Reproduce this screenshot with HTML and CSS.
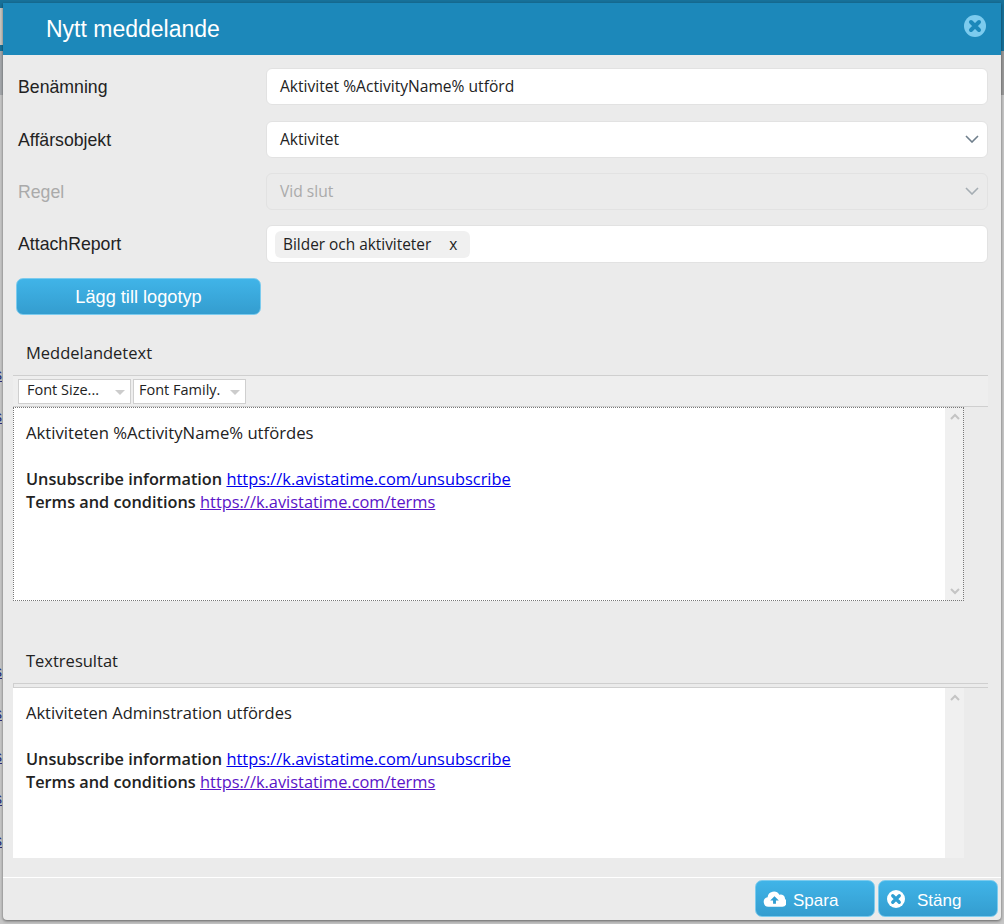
FILE: index.html
```html
<!DOCTYPE html>
<html lang="en">
<head>
  <meta charset="UTF-8">
  <meta name="viewport" content="width=device-width, initial-scale=1.0">
  <title>Nytt meddelande</title>
  <link rel="stylesheet" href="styles.css">
</head>
<body>
  <div class="backdrop">
    <!-- page behind the dialog, only its cut off links show -->
    <div class="behind">
      <span>s</span><span>s</span>
      <span class="blank">s</span><span class="blank">s</span><span class="blank">s</span><span class="blank">s</span><span class="blank">s</span>
      <span>s</span><span>s</span><span>s</span><span>s</span><span>s</span>
    </div>

    <div class="modal">
      <div class="modal-header">
        <h1>Nytt meddelande</h1>
        <svg class="close-icon" width="22" height="22" viewBox="0 0 22 22">
          <circle cx="11" cy="11" r="11" fill="#7ccbee"/>
          <path d="M7 7l8 8M15 7l-8 8" stroke="#1c88ba" stroke-width="4" stroke-linecap="round"/>
        </svg>
      </div>

      <div class="modal-body">
        <div class="form-row">
          <label>Benämning</label>
          <div class="field">Aktivitet %ActivityName% utförd</div>
        </div>
        <div class="form-row">
          <label>Affärsobjekt</label>
          <div class="field select">Aktivitet
            <svg class="chevron" width="14" height="8" viewBox="0 0 14 8"><path d="M1 1l6 6 6-6" fill="none" stroke="#6f7f8c" stroke-width="1.6"/></svg>
          </div>
        </div>
        <div class="form-row disabled">
          <label>Regel</label>
          <div class="field select">Vid slut
            <svg class="chevron" width="14" height="8" viewBox="0 0 14 8"><path d="M1 1l6 6 6-6" fill="none" stroke="#a5adb3" stroke-width="1.6"/></svg>
          </div>
        </div>
        <div class="form-row tags-row">
          <label>AttachReport</label>
          <div class="field tags"><span class="tag">Bilder och aktiviteter <span class="tag-x">x</span></span></div>
        </div>

        <button class="btn btn-logo">Lägg till logotyp</button>

        <div class="section-title">Meddelandetext</div>
        <div class="toolbar">
          <div class="tool-select">Font Size...<span class="caret"></span></div>
          <div class="tool-select family">Font Family.<span class="caret"></span></div>
        </div>
        <div class="editor editor-source">
          <div class="editor-text">
            <p>Aktiviteten %ActivityName% utfördes</p>
            <p class="gap"><b>Unsubscribe information</b> <a href="#">https://k.avistatime.com/unsubscribe</a></p>
            <p><b>Terms and conditions</b> <a href="#" class="visited">https://k.avistatime.com/terms</a></p>
          </div>
          <div class="scrollbar">
            <svg width="10" height="7" viewBox="0 0 10 7"><path d="M1 6l4-4 4 4" fill="none" stroke="#c4c4c4" stroke-width="2"/></svg>
            <svg width="10" height="7" viewBox="0 0 10 7"><path d="M1 1l4 4 4-4" fill="none" stroke="#c4c4c4" stroke-width="2"/></svg>
          </div>
        </div>

        <div class="section-title result-title">Textresultat</div>
        <div class="toolbar toolbar-empty"></div>
        <div class="editor editor-result">
          <div class="editor-text">
            <p>Aktiviteten Adminstration utfördes</p>
            <p class="gap"><b>Unsubscribe information</b> <a href="#">https://k.avistatime.com/unsubscribe</a></p>
            <p><b>Terms and conditions</b> <a href="#" class="visited">https://k.avistatime.com/terms</a></p>
          </div>
          <div class="scrollbar">
            <svg width="10" height="7" viewBox="0 0 10 7"><path d="M1 6l4-4 4 4" fill="none" stroke="#c4c4c4" stroke-width="2"/></svg>
          </div>
        </div>
      </div>

      <div class="modal-footer">
        <button class="btn btn-foot">
          <svg width="23" height="18" viewBox="0 0 24 18"><path d="M6 17a5 5 0 0 1-1.200-9.900A6.500 6.500 0 0 1 17 4.600 4.500 4.500 0 0 1 23 9a4.500 4.500 0 0 1-3 8z" fill="#fff"/><path d="M12 6l-4.500 4.500h3V14h3v-3.500h3z" fill="#2f9fd3"/></svg>
          <span class="foot-label">Spara</span>
        </button>
        <button class="btn btn-foot btn-close">
          <svg width="18" height="18" viewBox="0 0 22 22"><circle cx="11" cy="11" r="11" fill="#fff"/><path d="M7 7l8 8M15 7l-8 8" stroke="#2f9fd3" stroke-width="4" stroke-linecap="round"/></svg>
          <span class="foot-label">Stäng</span>
        </button>
      </div>
    </div>
  </div>
</body>
</html>
```

FILE: styles.css
```css
html, body {
  margin: 0;
  height: 100%;
  overflow: hidden;
}
body {
  font-family: "Liberation Sans", Arial, sans-serif;
  background-color: #c4c4c4;
}
.backdrop {
  position: relative;
  height: 924px;
  padding: 3px 3px 4px 3px;
  box-sizing: border-box;
  background:
    linear-gradient(#17719a 0, #17719a 8px, #c9c6c0 8px, #c9c6c0 45px, #17719a 45px, #17719a 51px, #a5a8ac 51px, #a5a8ac 95px, #c6c6c6 95px) left top / 3px 100% no-repeat,
    linear-gradient(#17719a 0, #17719a 51px, #9a9a9a 51px, #9a9a9a 95px, #c6c6c6 95px) right top / 3px 100% no-repeat,
    linear-gradient(#17719a 0, #17719a 3px, #c4c4c4 3px);
}
.behind {
  position: absolute;
  left: 0;
  top: 366px;
  width: 3px;
  overflow: hidden;
  display: flex;
  flex-direction: column;
  color: #2a2f7a;
  font-size: 16px;
}
.behind span {
  height: 42.4px;
  margin-left: -6px;
  text-decoration: underline;
}
.behind .blank {
  visibility: hidden;
}
.modal {
  position: relative;
  height: 917px;
  background-color: #ebebeb;
  border-radius: 0 0 4px 4px;
  box-shadow: 0 1px 3px rgba(0, 0, 0, 0.5);
  display: flex;
  flex-direction: column;
}
.modal-header {
  height: 52px;
  flex: none;
  background-color: #1c88ba;
  display: flex;
  align-items: center;
  justify-content: space-between;
  padding: 0 15px 0 43px;
  box-sizing: border-box;
}
.modal-header h1 {
  margin: 0;
  font-size: 23px;
  font-weight: normal;
  color: #fff;
}
.close-icon {
  margin-top: -6px;
}
.modal-body {
  flex: 1;
  padding: 13px 13px 0 10px;
  min-height: 0;
}
.form-row {
  display: flex;
  align-items: center;
  height: 38px;
  margin-bottom: 14px;
}
.form-row:first-child {
  margin-top: -1px;
  margin-bottom: 15px;
}
.form-row label {
  width: 253px;
  padding-left: 5px;
  box-sizing: border-box;
  font-size: 17.700px;
  color: #222;
  flex: none;
  margin-top: 2px;
}
.form-row.disabled label {
  color: #aaa;
}
.field {
  flex: 1;
  height: 37px;
  box-sizing: border-box;
  background-color: #fff;
  border: 1px solid #e2e2e2;
  border-radius: 6px;
  padding: 0 12px 0 13px;
  display: flex;
  align-items: center;
  justify-content: space-between;
  font-family: "Open Sans", sans-serif;
  font-size: 15.600px;
  color: #222;
}
.select {
  padding-right: 8px;
}
.disabled .field {
  background-color: #ebebeb;
  color: #aaa;
}
.tags-row {
  margin-top: 15px;
  margin-bottom: 0;
}
.tags-row label {
  margin-top: 0;
}
.tags-row .field {
  height: 38px;
}
.tags {
  padding: 0 8px;
  justify-content: flex-start;
}
.tag {
  background-color: #f0f0f0;
  border-radius: 6px;
  padding: 3px 13px 3px 8px;
  font-size: 15.400px;
}
.tag-x {
  margin-left: 14px;
}
.btn {
  border: 1px solid #7ccbee;
  border-radius: 7px;
  background: linear-gradient(#40b4e8, #349dcf);
  color: #fff;
  font-family: "Liberation Sans", Arial, sans-serif;
  cursor: pointer;
}
.btn-logo {
  display: block;
  width: 245px;
  height: 37px;
  margin: 15px 0 0 3px;
  padding-top: 3px;
  font-size: 18.200px;
}
.section-title {
  font-family: "Open Sans", sans-serif;
  font-size: 16.500px;
  color: #222;
  padding-left: 13px;
  margin-top: 26px;
  height: 34px;
}
.toolbar {
  height: 32px;
  box-sizing: border-box;
  border-top: 1px solid #cfcfcf;
  border-bottom: 1px solid #cfcfcf;
  background-color: #eee;
  display: flex;
  align-items: center;
  gap: 2px;
  padding-left: 5px;
}
.tool-select {
  position: relative;
  width: 113px;
  height: 25px;
  box-sizing: border-box;
  background-color: #fff;
  border: 1px solid #cfcfcf;
  padding-left: 8px;
  line-height: 20px;
  font-family: "Open Sans", sans-serif;
  font-size: 14.500px;
  white-space: nowrap;
  color: #222;
}
.family {
  padding-left: 5px;
}
.caret {
  position: absolute;
  right: 5px;
  top: 10px;
  border-left: 5px solid transparent;
  border-right: 5px solid transparent;
  border-top: 5px solid #ccc;
}
.editor {
  width: 951px;
  display: flex;
  font-family: "Open Sans", sans-serif;
  font-size: 16.500px;
  line-height: 23px;
  color: #222;
}
.editor-source {
  height: 194px;
  box-sizing: border-box;
  outline: 1px dotted #777;
  outline-offset: -1px;
}
.editor-source p:first-child {
  font-size: 16.700px;
}
.editor-result {
  height: 170px;
}
.editor-text {
  flex: 1;
  background-color: #fff;
  padding: 14px 13px;
  white-space: nowrap;
}
.editor-result .editor-text {
  padding-top: 13px;
}
.editor-text p {
  margin: 0;
  height: 23px;
}
.editor-text b {
  font-weight: 600;
  font-size: 16.300px;
}
.editor-text .gap {
  margin-top: 23px;
}
.editor-text a {
  color: #00e;
  font-size: 16.400px;
}
.editor-text a.visited {
  color: #5a14c8;
}
.scrollbar {
  width: 19px;
  background-color: #f0f0f0;
  display: flex;
  flex-direction: column;
  justify-content: space-between;
  align-items: center;
  padding: 6px 0;
  box-sizing: border-box;
}
.result-title {
  margin-top: 48px;
  height: 34px;
}
.toolbar-empty {
  height: 5px;
  background-color: #ebebeb;
  border-left: 1px solid #cfcfcf;
}
.modal-footer {
  flex: none;
  height: 40px;
  border-top: 1px solid #fff;
  display: flex;
  justify-content: flex-end;
  align-items: flex-start;
  gap: 3px;
  padding: 2px 3px 0 0;
  box-sizing: content-box;
}
.btn-foot {
  width: 120px;
  height: 37px;
  display: flex;
  align-items: center;
  font-size: 17px;
  gap: 7px;
  padding: 0 0 0 7px;
}
.foot-label {
  margin-top: 4px;
}
.btn-close {
  padding-left: 8px;
  gap: 12px;
}
```
